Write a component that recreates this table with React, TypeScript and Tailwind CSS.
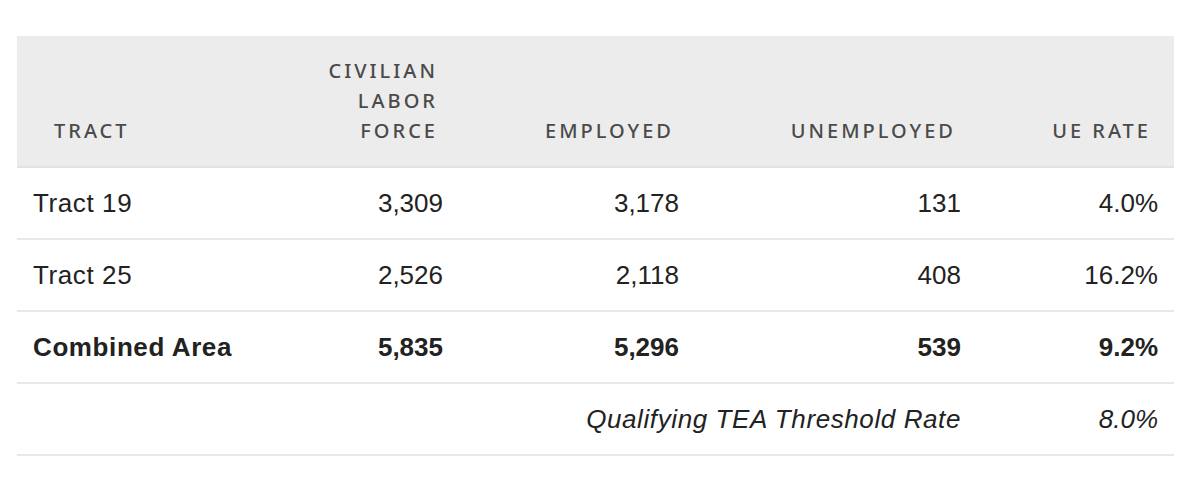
import React from 'react';

interface Row {
  tract: string;
  force: string;
  employed: string;
  unemployed: string;
  rate: string;
  total?: boolean;
}

const rows: Row[] = [
  { tract: 'Tract 19', force: '3,309', employed: '3,178', unemployed: '131', rate: '4.0%' },
  { tract: 'Tract 25', force: '2,526', employed: '2,118', unemployed: '408', rate: '16.2%' },
  { tract: 'Combined Area', force: '5,835', employed: '5,296', unemployed: '539', rate: '9.2%', total: true },
];

const th = 'align-bottom font-medium uppercase tracking-[0.15em] text-[#4a4a4a] text-[20px] leading-[30px] pt-[20px] pb-[20px]';
const td = 'h-[72px] px-4 align-middle border-b-2 border-[#e8e8e8]';

export default function App() {
  return (
    <div className="min-h-screen bg-white pt-[36px] pl-[17px]">
      <table
        className="w-[1157px] table-fixed border-collapse text-[#222] text-[26px]"
        style={{ fontFamily: '"Liberation Sans", Arial, sans-serif' }}
      >
        <colgroup>
          <col className="w-[300px]" />
          <col className="w-[142px]" />
          <col className="w-[236px]" />
          <col className="w-[282px]" />
          <col className="w-[197px]" />
        </colgroup>
        <thead
          className="bg-[#ececec] border-b-2 border-[#e2e2e2]"
          style={{ fontFamily: '"Noto Sans", "DejaVu Sans", sans-serif' }}
        >
          <tr>
            <th className={`${th} text-left pl-[37px]`}>Tract</th>
            <th className={`${th} text-right pr-[21px]`}>Civilian Labor Force</th>
            <th className={`${th} text-right pr-[21px]`}>Employed</th>
            <th className={`${th} text-right pr-[21px]`}>Unemployed</th>
            <th className={`${th} text-right pr-[23px]`}>UE Rate</th>
          </tr>
        </thead>
        <tbody>
          {rows.map(r => (
            <tr key={r.tract} className={r.total ? 'font-bold' : ''}>
              <td className={`${td} text-left tracking-[0.6px]`}>{r.tract}</td>
              <td className={`${td} text-right`}>{r.force}</td>
              <td className={`${td} text-right`}>{r.employed}</td>
              <td className={`${td} text-right`}>{r.unemployed}</td>
              <td className={`${td} text-right`}>{r.rate}</td>
            </tr>
          ))}
          <tr className="italic">
            <td colSpan={4} className={`${td} text-right tracking-[0.6px]`}>Qualifying TEA Threshold Rate</td>
            <td className={`${td} text-right`}>8.0%</td>
          </tr>
        </tbody>
      </table>
    </div>
  );
}
